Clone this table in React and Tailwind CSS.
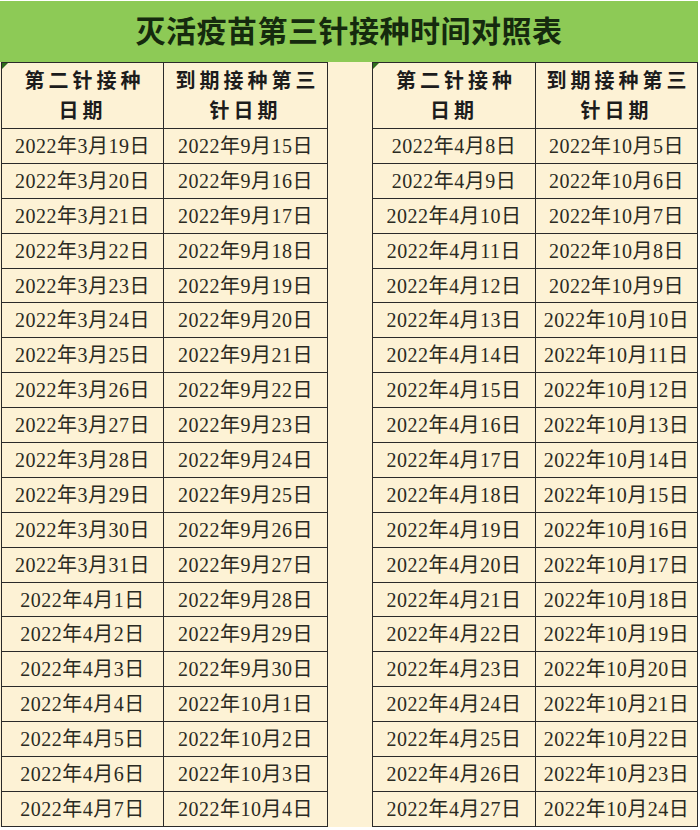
import React from "react";

const left = [
  ["2022年3月19日", "2022年9月15日"],
  ["2022年3月20日", "2022年9月16日"],
  ["2022年3月21日", "2022年9月17日"],
  ["2022年3月22日", "2022年9月18日"],
  ["2022年3月23日", "2022年9月19日"],
  ["2022年3月24日", "2022年9月20日"],
  ["2022年3月25日", "2022年9月21日"],
  ["2022年3月26日", "2022年9月22日"],
  ["2022年3月27日", "2022年9月23日"],
  ["2022年3月28日", "2022年9月24日"],
  ["2022年3月29日", "2022年9月25日"],
  ["2022年3月30日", "2022年9月26日"],
  ["2022年3月31日", "2022年9月27日"],
  ["2022年4月1日", "2022年9月28日"],
  ["2022年4月2日", "2022年9月29日"],
  ["2022年4月3日", "2022年9月30日"],
  ["2022年4月4日", "2022年10月1日"],
  ["2022年4月5日", "2022年10月2日"],
  ["2022年4月6日", "2022年10月3日"],
  ["2022年4月7日", "2022年10月4日"],
];

const right = [];
for (let i = 0; i < 20; i++) {
  right.push([`2022年4月${8 + i}日`, `2022年10月${5 + i}日`]);
}

const serif = "font-['Liberation_Serif','Noto_Sans_CJK_SC',serif]";

function Table({ rows, widths }) {
  return (
    <div className="relative border-l border-t border-[#2a2a2a]">
      {/* little green corner mark */}
      <div className="absolute left-0 top-0 w-0 h-0 border-t-[6px] border-r-[6px] border-t-[#2f6b1c] border-r-transparent" />
      <div className="flex h-[66px]">
        <div
          className={`${widths[0]} border-r border-b border-[#2a2a2a] flex flex-col items-center justify-center text-[20px] font-bold tracking-[4px] leading-[30px] text-[#1c1c1c] ${serif}`}
        >
          <span className="pl-[4px]">第二针接种</span>
          <span>日期</span>
        </div>
        <div
          className={`${widths[1]} border-r border-b border-[#2a2a2a] flex flex-col items-center justify-center text-[20px] font-bold tracking-[4px] leading-[30px] text-[#1c1c1c] ${serif}`}
        >
          <span className="pl-[4px]">到期接种第三</span>
          <span>针日期</span>
        </div>
      </div>
      {rows.map((r, i) => (
        <div key={i} className="flex h-[34.9px]">
          <div
            className={`${widths[0]} border-r border-b border-[#2a2a2a] flex items-center justify-center text-[20px] text-[#2a2a22] tracking-[0.5px] ${serif}`}
          >
            {r[0]}
          </div>
          <div
            className={`${widths[1]} border-r border-b border-[#2a2a2a] flex items-center justify-center text-[20px] text-[#2a2a22] tracking-[0.5px] ${serif}`}
          >
            {r[1]}
          </div>
        </div>
      ))}
    </div>
  );
}

export default function App() {
  return (
    <div className="w-[700px] h-[830px] bg-white pt-[1px]">
      <div className="w-[698px] bg-[#fdf2d5]">
        <div className="h-[61px] bg-[#8dca56] flex items-center justify-center">
          <h1
            className={`text-[30px] font-bold text-[#152a0e] tracking-[0.5px] ${serif}`}
          >
            灭活疫苗第三针接种时间对照表
          </h1>
        </div>
        <div className="flex justify-between pl-[1px]">
          <Table rows={left} widths={["w-[162px]", "w-[164px]"]} />
          <Table rows={right} widths={["w-[163px]", "w-[162px]"]} />
        </div>
      </div>
    </div>
  );
}
